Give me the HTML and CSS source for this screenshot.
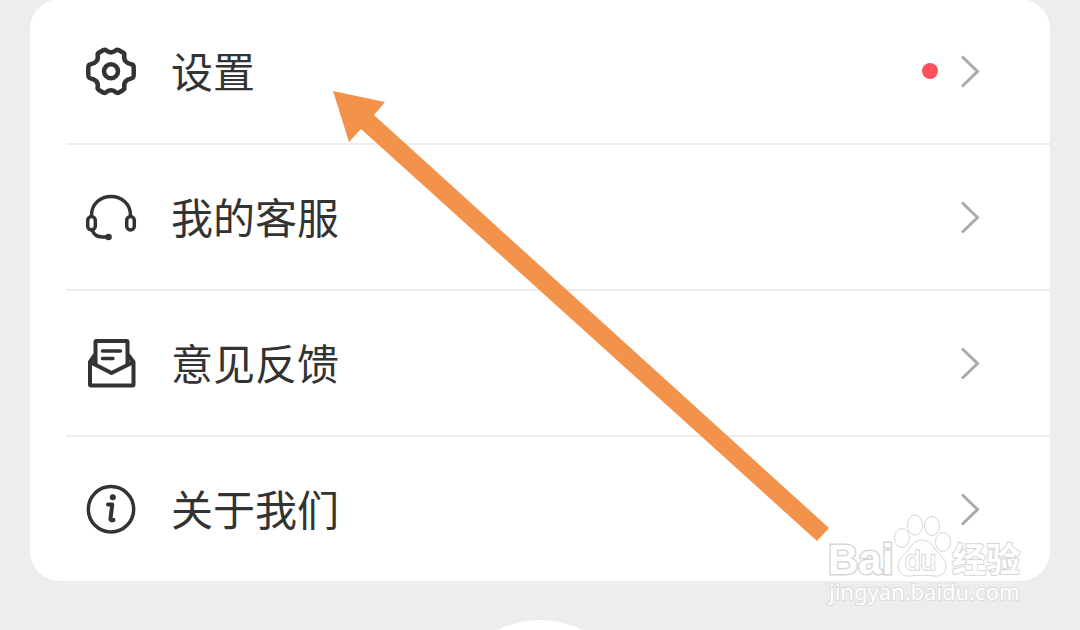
FILE: index.html
```html
<!DOCTYPE html>
<html lang="zh-CN">
<head>
<meta charset="utf-8">
<meta name="viewport" content="width=device-width, initial-scale=1">
<title>设置</title>
<link rel="stylesheet" href="styles.css">
</head>
<body>
<main class="page">
  <nav class="card">
    <a class="row" href="#settings">
      <svg class="icon" viewBox="0 0 54 54" aria-hidden="true">
        <path class="heavy" d="M19.500 6Q21 5.300 22.400 6.500Q27 10.200 31.600 6.500Q33 5.300 34.500 6L39.200 8.700Q40.700 9.700 40.300 11.300C39.400 16.200 42.500 19.700 47.300 20.200Q49.300 20.500 49.600 22.500Q50 27 49.600 32Q49.300 34 47.300 34.400C42.500 35 39.400 38.500 40.300 43.300Q40.700 45 39.200 46L34.500 48.700Q33 49.300 31.600 48.100Q27 44.400 22.400 48.100Q21 49.300 19.500 48.700L14.800 46Q13.300 45 13.700 43.300C14.600 38.500 11.500 35 6.700 34.400Q4.700 34 4.400 32Q4 27 4.400 22.500Q4.700 20.500 6.700 20.200C11.500 19.700 14.600 16.200 13.700 11.300Q13.300 9.700 14.800 8.700Z"/>
        <circle class="heavy" cx="27" cy="27.300" r="7"/>
      </svg>
      <span class="label">设置</span>
      <span class="dot"></span>
      <svg class="chevron" viewBox="0 0 20 34" aria-hidden="true"><path d="M2 2.500L17.500 17.500L2 32.500"/></svg>
    </a>
    <a class="row" href="#service">
      <svg class="icon" viewBox="0 0 54 54" aria-hidden="true">
        <path class="medium" d="M7.500 25.500C7.500 14 16 6.500 27 6.500S46.500 14 46.500 25.500M8 39.500C9.500 44.500 13 47 18.500 47H24"/>
        <rect class="medium" x="3.700" y="26.500" width="7.600" height="13.500" rx="3.800"/>
        <rect class="medium" x="42.700" y="26.500" width="7.600" height="13.500" rx="3.800"/>
        <circle class="solid" cx="24.500" cy="47" r="3.300"/>
      </svg>
      <span class="label">我的客服</span>
      <svg class="chevron" viewBox="0 0 20 34" aria-hidden="true"><path d="M2 2.500L17.500 17.500L2 32.500"/></svg>
    </a>
    <a class="row" href="#feedback">
      <svg class="icon" viewBox="0 0 54 54" aria-hidden="true">
        <path d="M6 26V48.500Q6 49.500 7 49.500H48.500Q49.500 49.500 49.500 48.500V26L27.500 37L6 26L11.500 18M49.500 26L43.500 18M11.500 28V6Q11.500 5 12.500 5H42.500Q43.500 5 43.500 6V28"/>
        <path class="medium" d="M18.500 15H36.500M18.500 22.500H29"/>
      </svg>
      <span class="label">意见反馈</span>
      <svg class="chevron" viewBox="0 0 20 34" aria-hidden="true"><path d="M2 2.500L17.500 17.500L2 32.500"/></svg>
    </a>
    <a class="row" href="#about">
      <svg class="icon" viewBox="0 0 54 54" aria-hidden="true">
        <circle class="medium" cx="27" cy="27.300" r="22.700"/>
        <circle class="solid" cx="28.800" cy="15.300" r="3"/>
        <path d="M24 22.500H28.300L26.500 36.500Q26.200 39 29.500 38"/>
      </svg>
      <span class="label">关于我们</span>
      <svg class="chevron" viewBox="0 0 20 34" aria-hidden="true"><path d="M2 2.500L17.500 17.500L2 32.500"/></svg>
    </a>
  </nav>
  <div class="tab-bump"></div>
  <svg class="arrow" viewBox="0 0 496 451" aria-hidden="true">
    <path d="M0 0L52 11L41 24L496 437L484 450L28 38L16 51Z"/>
  </svg>
  <svg class="watermark" viewBox="0 0 200 100" role="img" aria-label="Baidu 经验">
    <text class="brand" x="3" y="64">Bai</text>
    <ellipse cx="77" cy="28" rx="7.500" ry="9.500"/>
    <ellipse cx="90" cy="15" rx="7.500" ry="10"/>
    <ellipse cx="107" cy="16" rx="7.500" ry="9.500"/>
    <ellipse cx="118" cy="32" rx="7.500" ry="9.500"/>
    <path d="M97 30C103 30 107 34 110 39C114 45 121 49 121 56C121 63 116 67 109 66C101 65 94 65 86 66C78 67 73 62 73 56C73 48 80 45 84 39C87 34 91 30 97 30Z"/>
    <text class="du" x="80" y="60">du</text>
    <text class="hanzi" x="127" y="62">经验</text>
    <text class="url" x="4" y="90">jingyan.baidu.com</text>
  </svg>
</main>
</body>
</html>
```
FILE: styles.css
```css
* {
  box-sizing: border-box;
}

body {
  margin: 0;
  background: #ededed;
  color: #333;
  font-family: "Noto Sans CJK SC", sans-serif;
}

.page {
  position: relative;
  min-height: 100vh;
  padding: 0 30px;
  overflow: hidden;
}

.card {
  margin-top: -1px;
  padding-left: 36px;
  border-radius: 30px;
  background: #fff;
}

.row {
  display: flex;
  align-items: center;
  height: 146px;
  padding: 0 70px 0 18px;
  border-bottom: 2px solid #ededed;
  color: inherit;
  text-decoration: none;
}

.row:last-child {
  height: 144px;
  border-bottom: 0;
}

.icon {
  flex: none;
  width: 54px;
  height: 54px;
  fill: none;
  stroke: #333;
  stroke-width: 4;
  stroke-linecap: round;
  stroke-linejoin: round;
}

.icon .heavy {
  stroke-width: 4.5;
}

.icon .medium {
  stroke-width: 3.5;
}

.icon .solid {
  fill: #333;
  stroke: none;
}

.label {
  flex: 1;
  margin-left: 33px;
  padding-bottom: 2px;
  font-size: 42px;
  line-height: 60px;
}

.dot {
  width: 16px;
  height: 16px;
  margin-right: 22px;
  border-radius: 50%;
  background: #ff515c;
}

.chevron {
  flex: none;
  width: 20px;
  height: 34px;
  fill: none;
  stroke: #aaa;
  stroke-width: 3;
}

.tab-bump {
  position: absolute;
  top: 620px;
  left: 50%;
  width: 186px;
  height: 186px;
  border-radius: 50%;
  background: #fff;
  transform: translateX(-50%);
}

.arrow {
  position: absolute;
  top: 91px;
  left: 333px;
  width: 496px;
  height: 451px;
  fill: #f3934b;
  pointer-events: none;
}

.watermark {
  position: absolute;
  top: 510px;
  left: 825px;
  width: 200px;
  height: 100px;
  fill: #fff;
  stroke: #d6d6d6;
  stroke-width: 1;
  pointer-events: none;
}

.brand {
  font: bold 42px "Liberation Sans", sans-serif;
  stroke-width: 3;
  paint-order: stroke;
}

.du {
  font: 28px "Liberation Sans", sans-serif;
  stroke-width: 2;
  paint-order: stroke;
}

.hanzi {
  font: bold 34px "Noto Sans CJK SC", sans-serif;
  stroke-width: 2;
  paint-order: stroke;
}

.url {
  font: 22px "Noto Sans", sans-serif;
  stroke: #dcdcdc;
  stroke-width: 2;
  paint-order: stroke;
}
```
